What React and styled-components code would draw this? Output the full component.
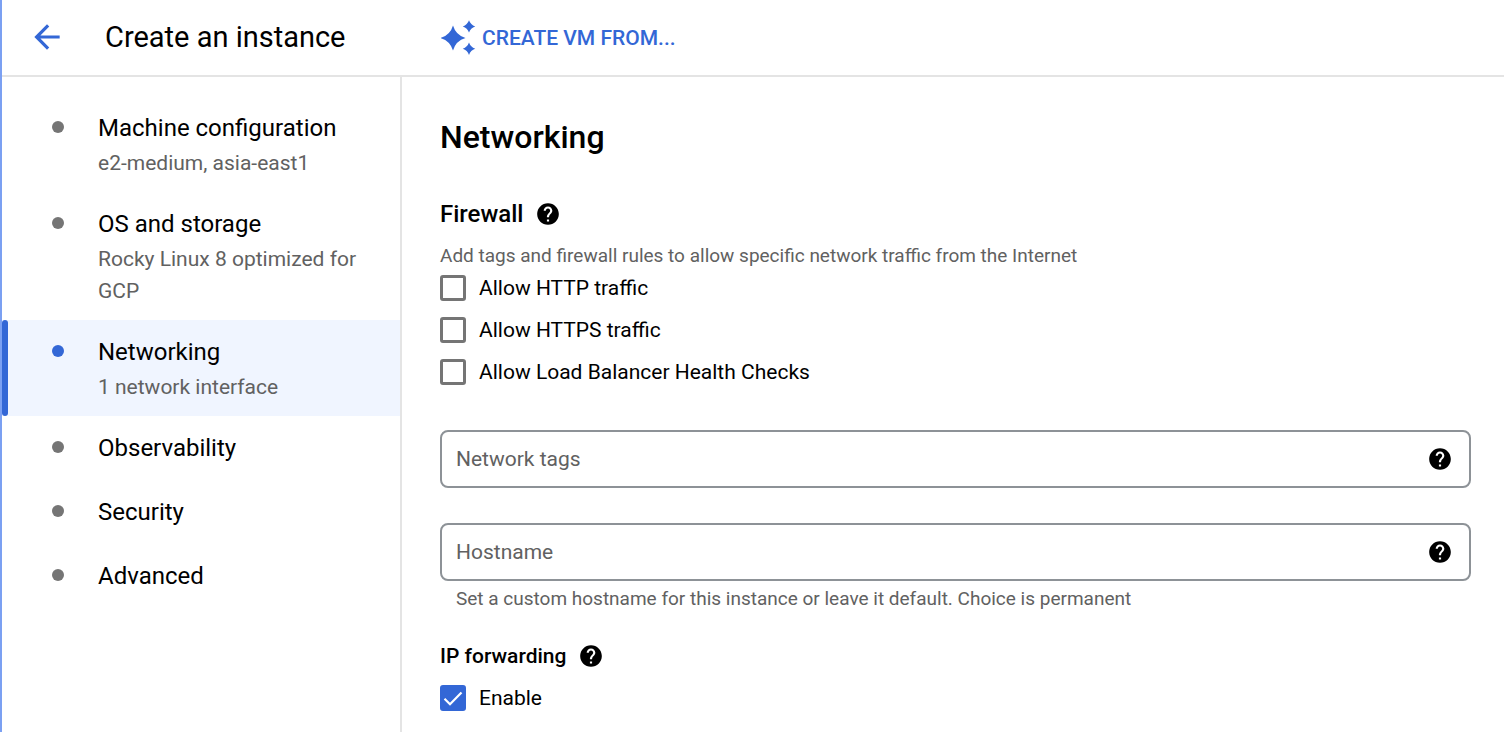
import React, { useId, useState } from "react";
import styled, { createGlobalStyle, ThemeProvider } from "styled-components";

const theme = {
  blue: "#3367d6",
  text: "#000000",
  muted: "#616161",
  line: "#e4e4e4",
  control: "#757575",
  field: "#8d9297",
  selected: "#f0f5ff",
};

const GlobalStyle = createGlobalStyle`
  *, *::before, *::after { box-sizing: border-box; }
  body {
    margin: 0;
    background: #fff;
    color: ${theme.text};
    font-family: Roboto, "Liberation Sans", sans-serif;
  }
  button, input { font-family: inherit; }
`;

const Page = styled.div`
  display: flex;
  flex-direction: column;
  min-height: 100vh;
  border-left: 2px solid #7ba0f2;
`;

const Header = styled.header`
  display: flex;
  align-items: center;
  height: 77px;
  border-bottom: 2px solid ${(p) => p.theme.line};
`;

const HeaderStart = styled.div`
  display: flex;
  align-items: center;
  gap: 39px;
  width: 439px;
  flex: none;
  padding: 0 0 2px 26px;
`;

const IconButton = styled.button`
  display: flex;
  flex: none;
  padding: 0;
  border: 0;
  background: none;
  color: ${(p) => p.theme[p.$tone] || p.theme.text};
  cursor: pointer;
`;

const Title = styled.h1`
  margin: 0;
  font-size: 29px;
  font-weight: 400;
  line-height: 40px;
`;

const TextButton = styled.button`
  display: flex;
  align-items: center;
  gap: 6px;
  padding: 0;
  border: 0;
  background: none;
  color: ${(p) => p.theme.blue};
  font-size: 21px;
  font-weight: 500;
  line-height: 28px;
  cursor: pointer;
`;

const Body = styled.div`
  display: flex;
  flex: 1;
`;

const Sidebar = styled.nav`
  flex: none;
  width: 400px;
  padding-top: 19px;
  border-right: 2px solid ${(p) => p.theme.line};
`;

const StepList = styled.ul`
  margin: 0;
  padding: 0;
  list-style: none;
`;

const StepLink = styled.a`
  position: relative;
  display: flex;
  gap: 34px;
  padding: 13px 24px 13px 50px;
  background: ${(p) => (p.$active ? p.theme.selected : "transparent")};
  color: inherit;
  text-decoration: none;

  &::before {
    content: "";
    position: absolute;
    inset: 0 auto 0 0;
    width: ${(p) => (p.$active ? "6px" : "0")};
    border-radius: 3px;
    background: ${(p) => p.theme.blue};
  }
`;

const Dot = styled.span`
  flex: none;
  width: 12px;
  height: 12px;
  margin-top: 12px;
  border-radius: 50%;
  background: ${(p) => (p.$active ? p.theme.blue : p.theme.control)};
`;

const StepTitle = styled.span`
  display: block;
  font-size: 24px;
  line-height: 38px;
`;

const StepNote = styled.span`
  display: block;
  color: ${(p) => p.theme.muted};
  font-size: 21px;
  line-height: 32px;
`;

const Main = styled.main`
  flex: 1;
  min-width: 0;
  padding: 40px 33px 20px 38px;
`;

const PageHeading = styled.h2`
  margin: 0 0 41px;
  font-size: 32px;
  font-weight: 500;
  line-height: 40px;
`;

const SectionHead = styled.div`
  display: flex;
  align-items: center;
  gap: 12px;
`;

const SectionTitle = styled.h3`
  margin: 0;
  font-size: 24px;
  font-weight: 500;
  line-height: 32px;
`;

const SubTitle = styled.h4`
  margin: 0;
  font-size: 21px;
  font-weight: 500;
  line-height: 28px;
`;

const Hint = styled.p`
  margin: 12px 0 5px;
  color: ${(p) => p.theme.muted};
  font-size: 19px;
  line-height: 28px;
`;

const Checks = styled.div`
  display: flex;
  flex-direction: column;
  align-items: flex-start;
  gap: 16px;
`;

const Forwarding = styled.section`
  display: flex;
  flex-direction: column;
  align-items: flex-start;
  gap: 15px;
  margin-top: 31px;
`;

const CheckLabel = styled.label`
  display: flex;
  align-items: center;
  gap: 13px;
  font-size: 21px;
  line-height: 26px;
  cursor: pointer;
`;

const CheckBox = styled.span`
  display: grid;
  place-items: center;

  & > * { grid-area: 1 / 1; }
  & > svg { pointer-events: none; }
`;

const CheckInput = styled.input`
  appearance: none;
  width: 26px;
  height: 26px;
  margin: 0;
  border: 3px solid ${(p) => p.theme.control};
  border-radius: 3px;
  background: #fff;

  &:checked {
    border-color: ${(p) => p.theme.blue};
    background: ${(p) => p.theme.blue};
  }
`;

const Fields = styled.div`
  display: flex;
  flex-direction: column;
  gap: 35px;
  margin-top: 45px;
`;

const FieldBox = styled.div`
  display: flex;
  align-items: center;
  height: 58px;
  padding: 0 16px 0 14px;
  border: 2px solid ${(p) => p.theme.field};
  border-radius: 8px;
`;

const FieldInput = styled.input`
  flex: 1;
  min-width: 0;
  padding: 0;
  border: 0;
  outline: 0;
  background: none;
  color: ${(p) => p.theme.text};
  font-size: 21px;
  line-height: 28px;

  &::placeholder { color: ${(p) => p.theme.muted}; opacity: 1; }
`;

const FieldNote = styled.p`
  margin: 6px 16px 0;
  color: ${(p) => p.theme.muted};
  font-size: 19px;
  line-height: 24px;
`;

const steps = [
  { title: "Machine configuration", note: "e2-medium, asia-east1" },
  { title: "OS and storage", note: "Rocky Linux 8 optimized for GCP" },
  { title: "Networking", note: "1 network interface", active: true },
  { title: "Observability" },
  { title: "Security" },
  { title: "Advanced" },
];

function BackIcon() {
  return (
    <svg width="38" height="38" viewBox="0 0 24 24" fill="currentColor" aria-hidden="true">
      <path d="M20 11H7.83l5.59-5.59L12 4l-8 8 8 8 1.41-1.41L7.83 13H20v-2z" />
    </svg>
  );
}

function SparkIcon() {
  return (
    <svg width="35" height="36" viewBox="0 0 35 36" fill="currentColor" aria-hidden="true">
      <path d="M12 5.5 Q14.8 15.2 24.5 18 Q14.8 20.8 12 30.5 Q9.2 20.8 -.5 18 Q9.2 15.2 12 5.5Z" />
      <path d="M28 .2 Q29.6 4.8 34.2 6.4 Q29.6 8 28 12.6 Q26.4 8 21.8 6.4 Q26.4 4.8 28 .2Z" />
      <path d="M28 22.6 Q29.6 27.2 34.2 28.8 Q29.6 30.4 28 35 Q26.4 30.4 21.8 28.8 Q26.4 27.2 28 22.6Z" />
    </svg>
  );
}

function Help({ topic }) {
  return (
    <IconButton type="button" aria-label={`Help: ${topic}`}>
      <svg width="26" height="26" viewBox="0 0 24 24" fill="currentColor" aria-hidden="true">
        <path d="M12 2C6.48 2 2 6.48 2 12s4.48 10 10 10 10-4.48 10-10S17.52 2 12 2zm1 17h-2v-2h2v2zm2.07-7.75l-.9.92C13.45 12.9 13 13.5 13 15h-2v-.5c0-1.1.45-2.1 1.17-2.83l1.24-1.26c.37-.36.59-.86.59-1.41 0-1.1-.9-2-2-2s-2 .9-2 2H8c0-2.21 1.79-4 4-4s4 1.79 4 4c0 .88-.36 1.68-.93 2.25z" />
      </svg>
    </IconButton>
  );
}

function Check({ label, initial = false }) {
  const [on, setOn] = useState(initial);
  return (
    <CheckLabel>
      <CheckBox>
        <CheckInput type="checkbox" checked={on} onChange={(e) => setOn(e.target.checked)} />
        {on && (
          <svg width="26" height="26" viewBox="0 0 26 26" fill="none" stroke="#fff" strokeWidth="2.2" aria-hidden="true">
            <path d="M4.5 13.8 10 19.2 21.5 7.4" />
          </svg>
        )}
      </CheckBox>
      {label}
    </CheckLabel>
  );
}

function Field({ label, note }) {
  const id = useId();
  return (
    <div>
      <FieldBox>
        <FieldInput
          type="text"
          placeholder={label}
          aria-label={label}
          aria-describedby={note ? id : undefined}
        />
        <Help topic={label} />
      </FieldBox>
      {note && <FieldNote id={id}>{note}</FieldNote>}
    </div>
  );
}

export default function App() {
  return (
    <ThemeProvider theme={theme}>
      <GlobalStyle />
      <Page>
        <Header>
          <HeaderStart>
            <IconButton type="button" $tone="blue" aria-label="Back">
              <BackIcon />
            </IconButton>
            <Title>Create an instance</Title>
          </HeaderStart>
          <TextButton type="button">
            <SparkIcon />
            CREATE VM FROM...
          </TextButton>
        </Header>
        <Body>
          <Sidebar aria-label="Instance settings">
            <StepList>
              {steps.map((s) => (
                <li key={s.title}>
                  <StepLink href="#" $active={s.active} aria-current={s.active ? "step" : undefined}>
                    <Dot $active={s.active} />
                    <span>
                      <StepTitle>{s.title}</StepTitle>
                      {s.note && <StepNote>{s.note}</StepNote>}
                    </span>
                  </StepLink>
                </li>
              ))}
            </StepList>
          </Sidebar>
          <Main>
            <PageHeading>Networking</PageHeading>
            <SectionHead>
              <SectionTitle>Firewall</SectionTitle>
              <Help topic="Firewall" />
            </SectionHead>
            <Hint>Add tags and firewall rules to allow specific network traffic from the Internet</Hint>
            <Checks>
              <Check label="Allow HTTP traffic" />
              <Check label="Allow HTTPS traffic" />
              <Check label="Allow Load Balancer Health Checks" />
            </Checks>
            <Fields>
              <Field label="Network tags" />
              <Field
                label="Hostname"
                note="Set a custom hostname for this instance or leave it default. Choice is permanent"
              />
            </Fields>
            <Forwarding>
              <SectionHead>
                <SubTitle>IP forwarding</SubTitle>
                <Help topic="IP forwarding" />
              </SectionHead>
              <Check label="Enable" initial />
            </Forwarding>
          </Main>
        </Body>
      </Page>
    </ThemeProvider>
  );
}
